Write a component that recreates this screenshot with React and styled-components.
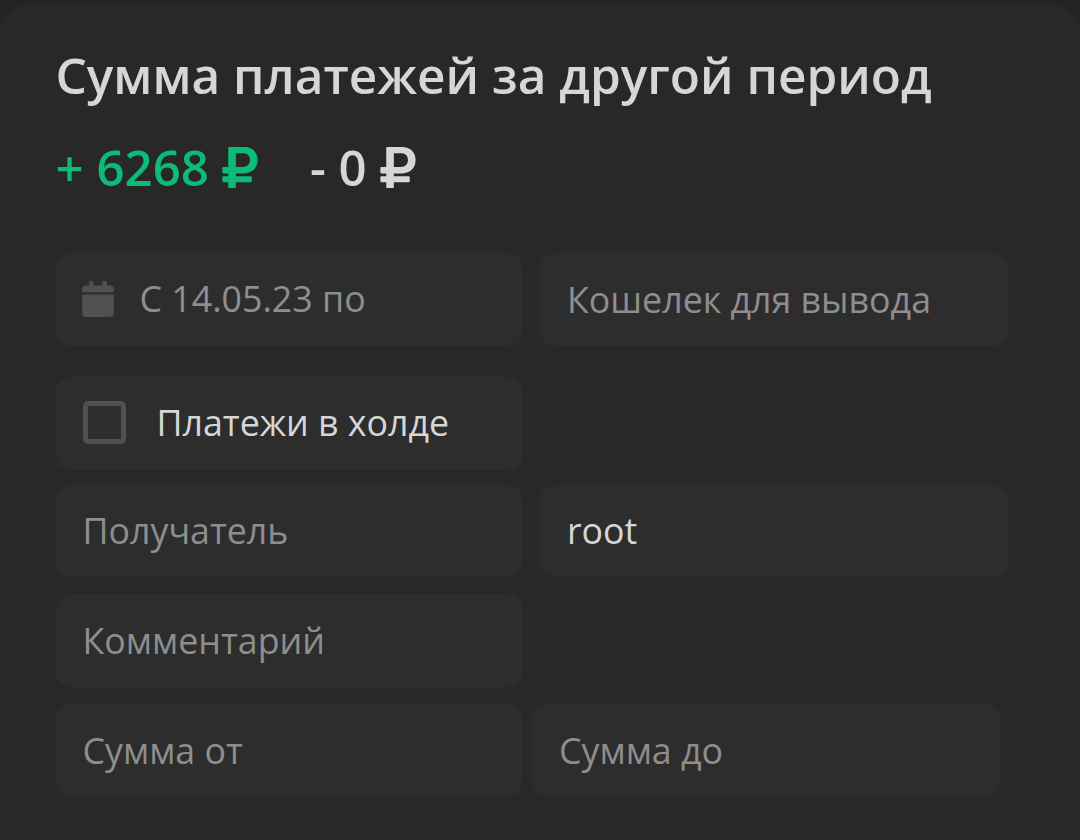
import React from "react";
import styled, { createGlobalStyle } from "styled-components";
import { FaCalendar, FaRubleSign } from "react-icons/fa";

const GlobalStyle = createGlobalStyle`
  body {
    margin: 0;
    background: #232323;
    font-family: "Open Sans", "Noto Sans", sans-serif;
  }
`;
const Card = styled.main`
  box-sizing: border-box;
  height: 836px;
  margin-top: 4px;
  padding: 35px 56px 0 55.5px;
  border-radius: 28px 28px 0 0;
  background: #282828;
  overflow: hidden;
`;
const Title = styled.h1`
  margin: 0;
  font-weight: 600;
  font-size: 49.5px;
  line-height: 72px;
  white-space: nowrap;
  color: #d6d6d6;
`;
const Totals = styled.div`
  display: flex;
  gap: 52px;
  height: 64px;
  margin: 24px 0 54px;
`;
const Amount = styled.div`
  display: flex;
  align-items: center;
  gap: 13px;
  font-weight: 600;
  font-size: 49.2px;
  line-height: 64px;
  white-space: nowrap;
  color: ${(props) => (props.$income ? "#0dbb79" : "#d6d6d6")};
`;
const Ruble = styled(FaRubleSign)`
  width: 36px;
  height: 47px;
`;
const Fields = styled.form`
  display: flex;
  flex-direction: column;
`;
const Row = styled.div`
  display: flex;
  gap: ${(props) => props.$gap || 17}px;
  margin-bottom: ${(props) => props.$space || 0}px;
`;
const Field = styled.label`
  display: flex;
  align-items: center;
  box-sizing: border-box;
  width: 467.5px;
  height: ${(props) => props.$height || 93}px;
  padding: 0 27px 2px;
  border-radius: 15px;
  background: #2d2d2d;
  font-size: 35.75px;
  line-height: 48px;
  white-space: nowrap;
  color: ${(props) => (props.$filled ? "#d6d6d6" : "#8e8e8e")};
`;
const FieldText = styled.span`
  padding-bottom: 2px;
`;
const AmountField = styled(Field)`
  padding-bottom: 0;
`;
const CalendarIcon = styled(FaCalendar)`
  width: 32px;
  height: 36px;
  margin-left: -1px;
  margin-right: 26px;
  color: #505050;
`;
const Checkbox = styled.span`
  box-sizing: border-box;
  width: 43px;
  height: 43px;
  margin-right: 31px;
  border: 5px solid #505050;
  border-radius: 5px;
`;

const App = () => {
  return (
    <>
      <GlobalStyle />
      <Card>
        <Title>Сумма платежей за другой период</Title>
        <Totals>
          <Amount $income>
            + 6268
            <Ruble />
          </Amount>
          <Amount>
            - 0
            <Ruble />
          </Amount>
        </Totals>
        <Fields>
          <Row $space={31}>
            <Field>
              <CalendarIcon />
              <FieldText>С 14.05.23 по</FieldText>
            </Field>
            <Field>Кошелек для вывода</Field>
          </Row>
          <Row $space={15}>
            <Field $filled>
              <Checkbox />
              <FieldText>Платежи в холде</FieldText>
            </Field>
          </Row>
          <Row $space={17}>
            <Field $height={92}>Получатель</Field>
            <Field $height={92} $filled>
              root
            </Field>
          </Row>
          <Row $space={17}>
            <Field>Комментарий</Field>
          </Row>
          <Row $gap={9}>
            <AmountField $height={92}>Сумма от</AmountField>
            <AmountField $height={92}>Сумма до</AmountField>
          </Row>
        </Fields>
      </Card>
    </>
  );
};

export default App;
